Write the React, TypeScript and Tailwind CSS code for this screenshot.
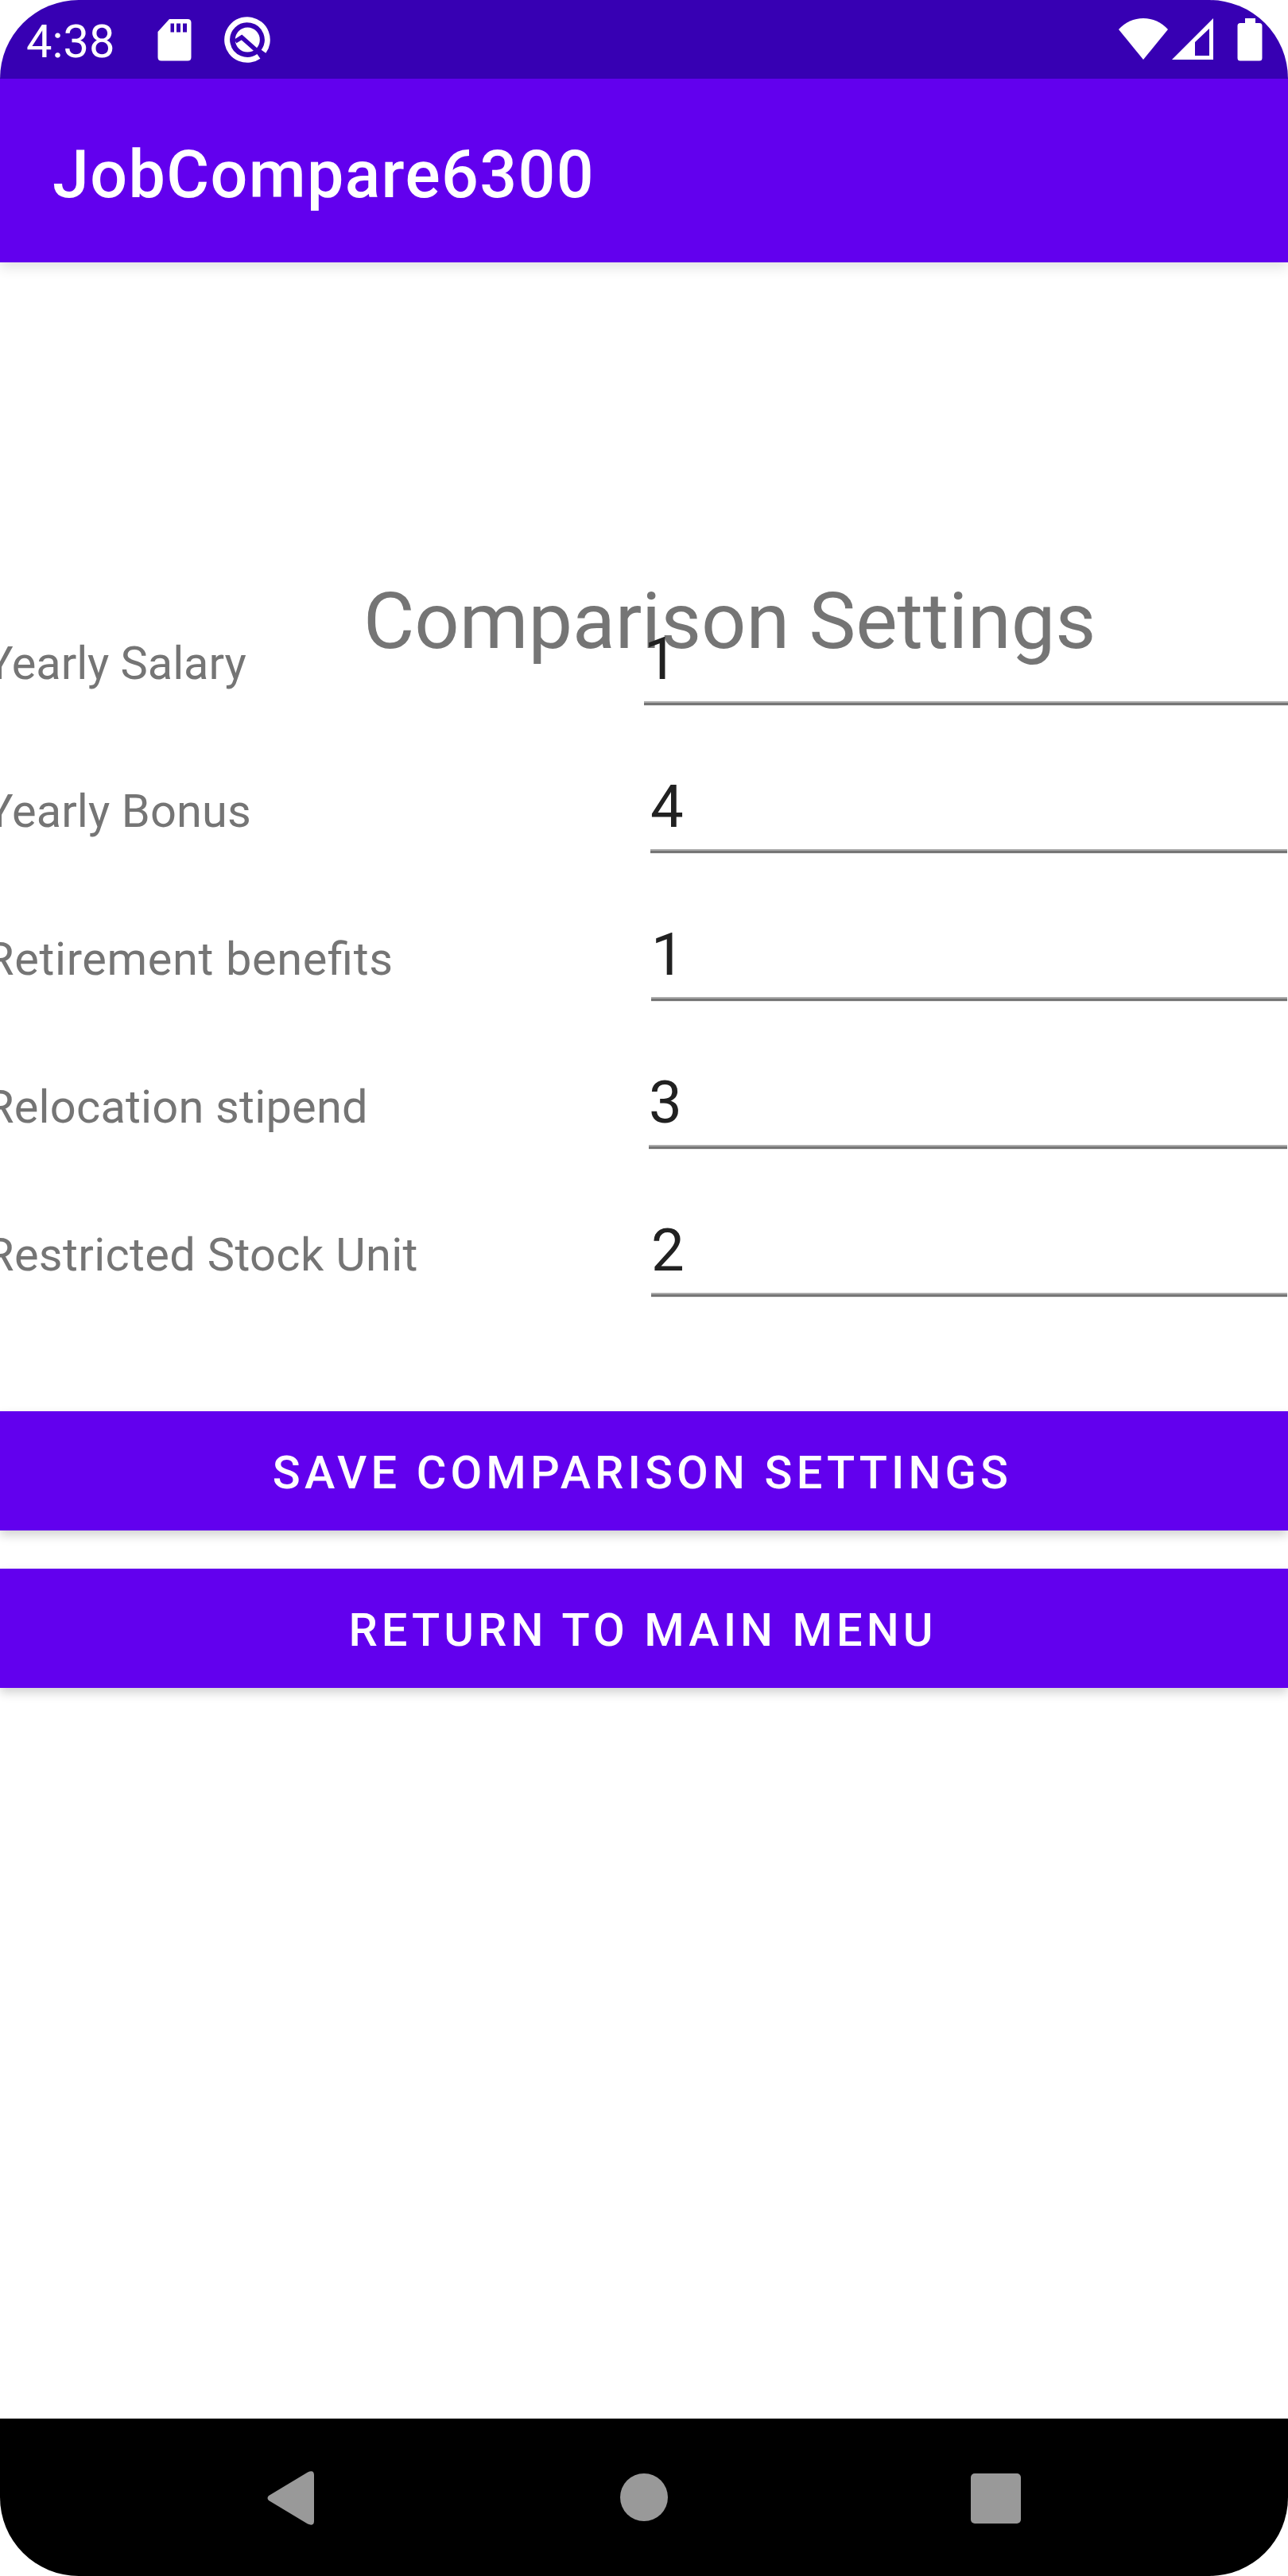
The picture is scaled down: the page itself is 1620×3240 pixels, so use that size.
const rows = [
  { label: "Yearly Salary", value: "1", track: "tracking-[-0.08px]", pad: "pl-[810px]", end: "pr-0" },
  { label: "Yearly Bonus", value: "4", track: "tracking-[0.1px]", pad: "pl-[818px]", end: "pr-px" },
  { label: "Retirement benefits", value: "1", track: "tracking-[0.62px]", pad: "pl-[819px]", end: "pr-px" },
  { label: "Relocation stipend", value: "3", track: "tracking-[0.2px]", pad: "pl-[816px]", end: "pr-px" },
  { label: "Restricted Stock Unit", value: "2", track: "tracking-[0.33px]", pad: "pl-[819px]", end: "pr-px" },
];

const actions = [
  { text: "Save comparison settings", track: "tracking-[5.12px] pr-[4px]" },
  { text: "Return to main menu", track: "tracking-[5.05px] pr-[3px]" },
];

function StatusBar() {
  return (
    <header className="relative z-10 flex h-[99px] items-start justify-between bg-[#3700b3] text-white">
      <div className="flex items-start">
        <span className="ml-[33px] mt-[18px] w-[165px] text-[57.75px] leading-[68px]">4:38</span>
        <svg className="mt-6 h-[53px] w-[43px]" viewBox="0 0 43 53" fill="currentColor">
          <path fillRule="evenodd" d="M15 0H38Q42.500 0 42.500 4.500V48Q42.500 52.500 38 52.500H5Q.5 52.500 .5 48V16ZM16.500 5.500V16.500H21V5.500ZM24 5.500V16.500H29V5.500ZM32 5.500V16.500H37V5.500Z" />
        </svg>
        <svg className="ml-[41px] mt-5 h-[60px] w-[60px]" viewBox="0 0 60 60" fill="none">
          <path d="M43.400 50.800A25.300 25.300 0 1 1 49.500 44.800" stroke="currentColor" strokeWidth="7" />
          <circle cx="29.300" cy="30" r="15.500" fill="currentColor" />
          <path d="M14 32L22 27L48 50" stroke="#3700b3" strokeWidth="5.500" />
        </svg>
      </div>
      <div className="flex items-start pr-8">
        <svg className="mt-[23px] h-[52px] w-[63px]" viewBox="0 0 63 52" fill="currentColor">
          <path d="M0 14Q13 0 31 0Q49 0 62 14L31 52Z" />
        </svg>
        <svg className="ml-1 mt-[23px] h-[52px] w-[53px]" viewBox="0 0 53 52" fill="currentColor">
          <path fillRule="evenodd" d="M0 52L52 0V52ZM29 30V47H47V13Z" />
        </svg>
        <svg className="ml-[29px] mt-[23px] h-[54px] w-[32px]" viewBox="0 0 32 54" fill="currentColor">
          <path d="M10 0H23V6H28Q31.500 6 31.500 9.500V50Q31.500 53.500 28 53.500H4Q.5 53.500 .5 50V9.500Q.5 6 4 6H10Z" />
        </svg>
      </div>
    </header>
  );
}

function NavBar() {
  return (
    <nav className="flex h-[198px] items-center bg-black pl-[336px] text-[#999]">
      <svg className="mt-0.5 h-[68px] w-[60px]" viewBox="0 0 60 68" fill="currentColor">
        <path d="M2 31L51 1.500Q59 -2 59 5V63Q59 70 51 66.500L2 37Q-1 34 2 31Z" />
      </svg>
      <div className="ml-[384px] h-[60px] w-[60px] rounded-full bg-[#999]" />
      <div className="ml-[381px] mt-[3px] h-[63px] w-[63px] rounded-[5px] bg-[#999]" />
    </nav>
  );
}

export default function App() {
  return (
    <div className="flex h-[3240px] w-[1620px] flex-col overflow-hidden rounded-[99px] bg-white font-['Roboto',sans-serif]">
      <StatusBar />
      <div className="h-[231px] bg-[#6200ee] pl-[66px] pt-[72px] text-[82.5px] font-medium leading-[97px] tracking-[1.4px] text-white shadow-[0_6px_16px_rgba(0,0,0,0.12)]">
        JobCompare6300
      </div>
      <main className="flex-1">
        <h1 className="mt-[393px] h-[76px] whitespace-nowrap pl-[457px] text-[99px] leading-[116px] tracking-[-0.1px] text-[#757575]">
          Comparison Settings
        </h1>
        {rows.map((row) => (
          <div key={row.label} className="relative h-[186px]">
            <span
              className={`absolute -left-[18px] top-px whitespace-nowrap text-[57.75px] leading-[68px] text-[#757575] [font-feature-settings:'liga'_1] ${row.track}`}
            >
              {row.label}
            </span>
            <div className={`${row.pad} ${row.end}`}>
              <div className="h-[88px] border-b-[3px] border-[#757575] text-[74.25px] leading-[60px] text-[#212121] shadow-[inset_0_-2px_0_#ababab,0_1px_0_#ececec]">
                {row.value}
              </div>
            </div>
          </div>
        ))}
        <div className="mt-[46px] flex flex-col gap-12">
          {actions.map((action) => (
            <button
              key={action.text}
              className={`h-[150px] w-full bg-[#6200ee] pt-1 text-[57.75px] font-medium uppercase leading-[68px] text-white shadow-[0_6px_12px_rgba(0,0,0,0.18)] ${action.track}`}
            >
              {action.text}
            </button>
          ))}
        </div>
      </main>
      <NavBar />
    </div>
  );
}
